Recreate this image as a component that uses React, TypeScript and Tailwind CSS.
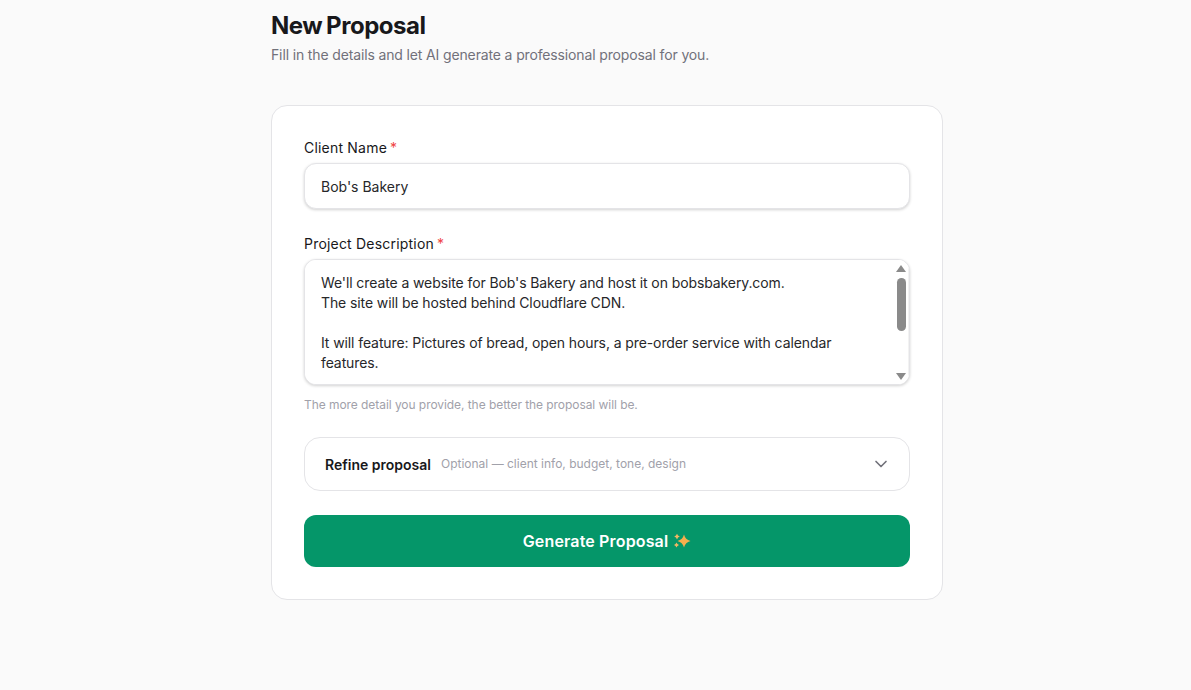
import { ChevronDown } from "lucide-react";

const description = `We'll create a website for Bob's Bakery and host it on bobsbakery.com.
The site will be hosted behind Cloudflare CDN.

It will feature: Pictures of bread, open hours, a pre-order service with calendar features.

We'll also set up a contact form and a small gallery.`;

function Sparkles() {
  return (
    <svg width="18" height="18" viewBox="0 0 18 18" aria-hidden="true">
      <path d="M11 2.500Q12.300 7.700 17.500 9Q12.300 10.300 11 15.500Q9.700 10.300 4.500 9Q9.700 7.700 11 2.500Z" fill="#f6ae4e" />
      <path d="M4 1.800Q4.600 4 6.800 4.600Q4.600 5.200 4 7.400Q3.400 5.200 1.200 4.600Q3.400 4 4 1.800Z" fill="#f3b763" />
      <path d="M3.500 10.500Q4.100 12.400 6 13Q4.100 13.600 3.500 15.500Q2.900 13.600 1 13Q2.900 12.400 3.500 10.500Z" fill="#f3b763" />
    </svg>
  );
}

function FakeScrollbar() {
  return (
    <div className="absolute top-0 right-0 bottom-0 flex w-[15px] flex-col items-center border-r border-[#f2f2f2] bg-white pt-[5px] pb-[4px]">
      <div className="h-0 w-0 border-x-[5px] border-b-[7px] border-x-transparent border-b-[#8a8a8a]" />
      <div className="mt-[6px] h-[53px] w-[9px] rounded-full bg-[#8a8a8a]" />
      <div className="flex-1" />
      <div className="h-0 w-0 border-x-[5px] border-t-[7px] border-x-transparent border-t-[#8a8a8a]" />
    </div>
  );
}

export default function App() {
  return (
    <div className="h-[690px] overflow-hidden bg-[#fafafa] font-['Inter','Liberation_Sans',sans-serif]">
      <div className="ml-[271px] w-[672px] pt-[10px]">
        <h1 className="text-[24px] leading-[32px] font-bold tracking-[-0.45px] text-[#18181b] [word-spacing:-1.5px]">
          New Proposal
        </h1>
        <p className="mt-[1px] text-[14px] leading-[24px] tracking-[-0.14px] text-[#71717a]">
          Fill in the details and let AI generate a professional proposal for you.
        </p>

        <div className="mt-[38px] rounded-2xl border border-[#e4e4e7] bg-white p-[32px]">
          <label className="block text-[14px] leading-[20px] font-normal tracking-[0.2px] text-[#18181b]">
            Client Name<span className="ml-[3px] text-[#ef4444]">*</span>
          </label>
          <input
            className="mt-[5px] block h-[46px] w-full rounded-xl border border-[#e4e4e7] bg-white px-4 text-[14px] text-[#27272a] shadow-[0_1px_3px_rgba(0,0,0,0.18)] outline-none"
            defaultValue="Bob's Bakery"
          />

          <label className="mt-[25px] block text-[14px] leading-[20px] font-normal tracking-[0.2px] text-[#18181b]">
            Project Description<span className="ml-[3px] text-[#ef4444]">*</span>
          </label>
          <div className="relative mt-[5px] h-[126px] overflow-hidden rounded-xl border border-[#e4e4e7] bg-white shadow-[0_1px_3px_rgba(0,0,0,0.18)]">
            <textarea
              className="block h-full w-full resize-none overflow-hidden bg-white py-[13px] pr-[40px] pl-4 text-[14px] leading-[20px] tracking-[-0.1px] text-[#27272a] outline-none"
              defaultValue={description}
            />
            <FakeScrollbar />
          </div>
          <p className="mt-[12px] text-[12px] leading-[16px] tracking-[-0.06px] text-[#a1a1aa]">
            The more detail you provide, the better the proposal will be.
          </p>

          <div className="mt-6 flex h-[54px] items-center justify-between rounded-2xl border border-[#e4e4e7] bg-white pr-[18px] pl-[20px]">
            <div className="flex items-center gap-[10px]">
              <span className="text-[14px] font-semibold text-[#18181b]">Refine proposal</span>
              <span className="text-[12px] text-[#a1a1aa]">Optional — client info, budget, tone, design</span>
            </div>
            <ChevronDown className="size-[20px] text-[#71717a]" />
          </div>

          <button
            type="button"
            className="mt-6 flex h-[52px] w-full items-center justify-center gap-[5px] rounded-xl bg-[#059669] text-[16px] font-semibold tracking-[0.15px] text-white"
          >
            Generate Proposal
            <Sparkles />
          </button>
        </div>
      </div>
    </div>
  );
}
